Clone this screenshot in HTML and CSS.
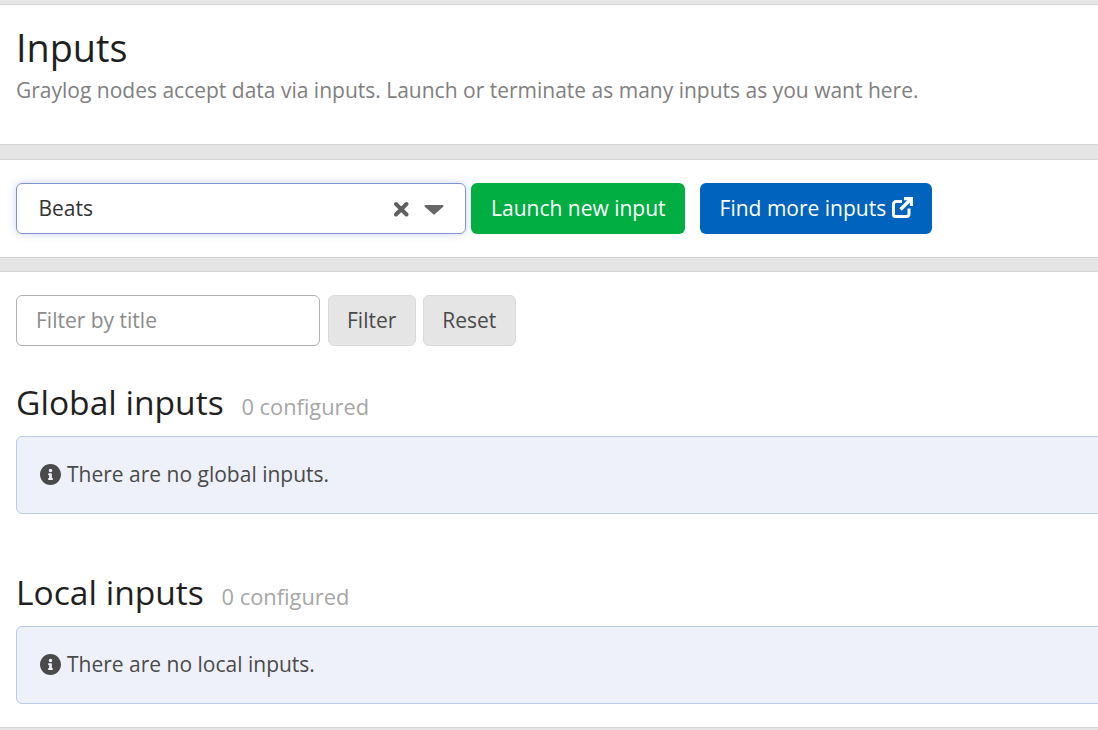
FILE: index.html
```html
<!DOCTYPE html>
<html lang="en">
<head>
<meta charset="utf-8">
<title>Inputs</title>
<link rel="stylesheet" href="styles.css">
</head>
<body>
<main class="page">
  <section class="band band-header">
    <h1 class="title">Inputs</h1>
    <p class="lead">Graylog nodes accept data via inputs. Launch or terminate as many inputs as you want here.</p>
  </section>
  <section class="band band-launch">
    <div class="select">
      <span class="select-value">Beats</span>
      <svg class="select-clear" viewBox="0 0 16 16" width="16" height="16" aria-hidden="true"><path d="M3 3 13.500 13.500M13.500 3 3 13.500" stroke="#5f5f5f" stroke-width="3.900" fill="none" stroke-linecap="round"/></svg>
      <svg class="select-arrow" viewBox="0 0 20 11" width="20" height="11" aria-hidden="true"><path d="M1.5 1h17a1 1 0 0 1 .7 1.700l-8.500 7.600a1 1 0 0 1-1.400 0L.8 2.700A1 1 0 0 1 1.500 1z" fill="#666"/></svg>
    </div>
    <button class="btn btn-green">Launch new input</button>
    <button class="btn btn-blue">Find more inputs
      <svg class="ext" viewBox="0 0 21 21" width="21" height="21" aria-hidden="true"><path d="M10 4.500H4a2.500 2.500 0 0 0-2.500 2.500v10.500a2 2 0 0 0 2 2H14.500a2.500 2.500 0 0 0 2.500-2.500V11.500" fill="none" stroke="#fff" stroke-width="3"/><path d="M12 1.500h7.500V9M18.500 2.500 8.500 12.500" fill="none" stroke="#fff" stroke-width="3.400"/></svg>
    </button>
  </section>
  <section class="band band-list">
    <form class="filter">
      <input class="filter-input" type="text" placeholder="Filter by title">
      <button class="btn btn-grey" type="button">Filter</button>
      <button class="btn btn-grey" type="button">Reset</button>
    </form>
    <h2 class="group-title">Global inputs <small class="count">0 configured</small></h2>
    <div class="alert">
      <svg class="info" viewBox="8 8 496 496" width="21" height="21" aria-hidden="true"><path fill="#4a4a4a" d="M256 8C119 8 8 119 8 256s111 248 248 248 248-111 248-248S393 8 256 8zm0 110a42 42 0 1 1 0 84 42 42 0 0 1 0-84zm56 254c0 7-5 12-12 12h-88c-7 0-12-5-12-12v-24c0-7 5-12 12-12h12v-64h-12c-7 0-12-5-12-12v-24c0-7 5-12 12-12h64c7 0 12 5 12 12v100h12c7 0 12 5 12 12z"/></svg>
      <span>There are no global inputs.</span>
    </div>
    <h2 class="group-title group-second">Local inputs <small class="count">0 configured</small></h2>
    <div class="alert">
      <svg class="info" viewBox="8 8 496 496" width="21" height="21" aria-hidden="true"><path fill="#4a4a4a" d="M256 8C119 8 8 119 8 256s111 248 248 248 248-111 248-248S393 8 256 8zm0 110a42 42 0 1 1 0 84 42 42 0 0 1 0-84zm56 254c0 7-5 12-12 12h-88c-7 0-12-5-12-12v-24c0-7 5-12 12-12h12v-64h-12c-7 0-12-5-12-12v-24c0-7 5-12 12-12h64c7 0 12 5 12 12v100h12c7 0 12 5 12 12z"/></svg>
      <span>There are no local inputs.</span>
    </div>
  </section>
</main>
</body>
</html>
```

FILE: styles.css
```css
html, body {
  margin: 0;
  height: 730px;
  overflow: hidden;
  background: #e5e5e5;
}
body {
  font-family: "Open Sans", sans-serif;
  font-size: 21px;
  color: #1f1f1f;
}
.page {
  width: 1130px;
  padding-top: 4px;
  display: flex;
  flex-direction: column;
  gap: 14px;
}
.band {
  background: #fff;
  border-top: 1px solid #d4d4d4;
  border-bottom: 1px solid #d4d4d4;
  padding: 0 16px;
  box-sizing: border-box;
}
.band-header { height: 141px; padding-top: 22px; }
.title {
  margin: 0;
  font-size: 37.8px;
  line-height: 41px;
  font-weight: 400;
  color: #1f1f1f;
}
.lead {
  margin: 8px 0 0;
  font-size: 21px;
  line-height: 28px;
  color: #808080;
}
.band-launch {
  height: 99px;
  padding-top: 23px;
  display: flex;
  align-items: flex-start;
}
.select {
  width: 450px;
  height: 51px;
  box-sizing: border-box;
  border: 1px solid #7f93d3;
  border-radius: 6px;
  box-shadow: 0 0 8px rgba(90, 115, 210, .3);
  display: flex;
  align-items: center;
  padding: 0 21px 0 21.5px;
}
.select-value { flex: 1; color: #333; margin-bottom: 2px; }
.select-clear { margin-right: 15px; }
.select-arrow { margin-top: 1px; }
.btn {
  height: 51px;
  box-sizing: border-box;
  border-radius: 6px;
  font: inherit;
  padding: 0 18px 2px 19px;
  border: 1px solid transparent;
}
.btn-green { background: #00ae42; color: #fff; margin-left: 5px; }
.btn-blue { background: #0063be; color: #fff; margin-left: 15px; display: flex; align-items: center; gap: 6px; }
.btn-grey { background: #e5e5e5; border-color: #d9d9d9; color: #4a4a4a; padding: 0 19px 2px 18px; }
.band-list { height: 457px; padding-top: 23px; margin-top: -1px; }
.filter { display: flex; gap: 7px; padding: 0; margin: 0; }
.filter-input {
  width: 304px;
  height: 51px;
  box-sizing: border-box;
  border: 1px solid #b0b0b0;
  border-radius: 6px;
  font: inherit;
  padding: 0 19px 2px;
  margin-right: 1px;
  color: #333;
}
.filter-input::placeholder { color: #8c8c8c; opacity: 1; }
.group-title {
  margin: 31px 0 0;
  font-size: 33.6px;
  line-height: 50px;
  font-weight: 400;
  color: #1f1f1f;
}
.group-second { margin-top: 53px; }
.count { font-size: 21.84px; color: #a6a6a6; margin-left: 9px; }
.alert {
  margin-top: 4px;
  height: 78px;
  box-sizing: border-box;
  border: 1px solid #bccbe8;
  border-radius: 6px;
  background: #eef1f9;
  display: flex;
  align-items: center;
  gap: 6px;
  padding: 0 23px 2px;
  color: #4a4a4a;
}
```
